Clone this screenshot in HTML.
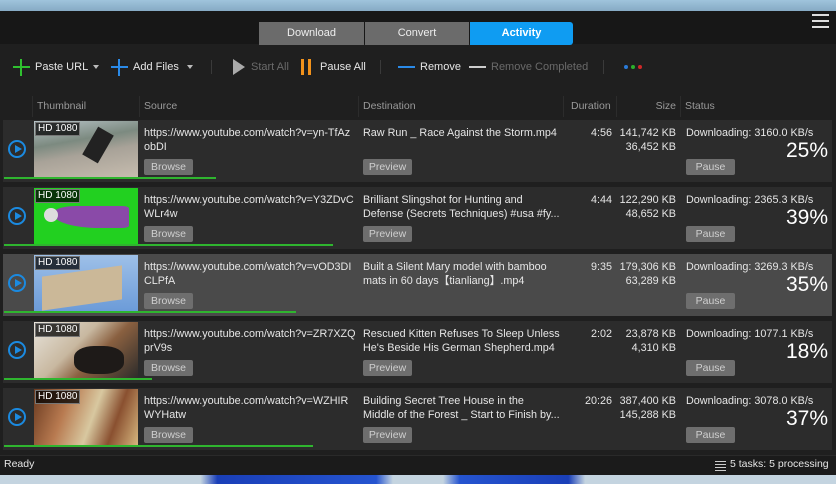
<!DOCTYPE html>
<html><head><meta charset="utf-8"><style>
*{margin:0;padding:0;box-sizing:border-box}
body{width:836px;height:484px;overflow:hidden;background:#1f1f1f;font-family:"Liberation Sans","Noto Sans CJK SC",sans-serif;font-size:11px;color:#e6e6e6;position:relative}
.a{position:absolute}
.top{left:0;top:0;width:836px;height:11px;background:linear-gradient(#9fc4dc,#86aac4)}
.hdr{left:0;top:11px;width:836px;height:33px;background:#171717}
.tab{top:22px;height:23px;background:#6b6b6b;color:#eee;text-align:center;line-height:23px;font-size:11px}
.tb{top:60px;font-size:11px;line-height:14px}
.col{top:96px;height:21px;line-height:21px;color:#9a9a9a;font-size:10.5px;border-left:1px solid #2c2c2c;padding-left:4px}
.row{left:3px;width:829px;height:62px;background:#2c2c2c}
.sel{background:#4a4a4a}
.btn{height:16px;line-height:16px;background:#6e6e6e;color:#cfcfcf;font-size:10.5px;text-align:center;border-radius:2px}
.pl{width:18px;height:18px;border:2px solid #1b8ae0;border-radius:50%}
.pl:after{content:"";position:absolute;left:5px;top:3px;border-left:7px solid #1b8ae0;border-top:4.5px solid transparent;border-bottom:4.5px solid transparent}
.th{width:104px;height:58px}
.hd{left:1px;top:1px;background:rgba(0,0,0,.75);color:#fff;font-size:10px;padding:0 2px;line-height:12px;border:1px solid #777}
.pg{height:2px;background:#2fb52f}
.t{line-height:14px;font-size:10.8px}
.r{text-align:right}
.pct{font-size:21px;color:#fff;text-align:right;width:100px}
.bot{left:0;top:475px;width:836px;height:9px;background:linear-gradient(90deg,#c4d4e0 0,#c4d4e0 24%,#1a3fb8 26%,#2554d0 45%,#c4d4e0 47%,#c4d4e0 53%,#2554d0 55%,#1a3fb8 68%,#c4d4e0 70%)}
</style></head><body>
<div class="a top"></div>
<div class="a hdr"></div>
<div class="a tab" style="left:259px;width:105px">Download</div>
<div class="a tab" style="left:365px;width:104px">Convert</div>
<div class="a tab" style="left:470px;width:103px;background:#0f9cf2;color:#fff;font-weight:bold;border-radius:0 3px 3px 0">Activity</div>
<div class="a" style="left:812px;top:14px;width:17px;height:2px;background:#ddd;box-shadow:0 6px 0 #ddd,0 12px 0 #ddd"></div>

<div class="a" style="left:13px;top:66px;width:17px;height:2px;background:#2fc02f"></div><div class="a" style="left:20px;top:59px;width:2px;height:17px;background:#2fc02f"></div>
<div class="a tb" style="left:35px">Paste URL</div><div class="a" style="left:93px;top:65px;border-top:4px solid #bbb;border-left:3.5px solid transparent;border-right:3.5px solid transparent"></div>
<div class="a" style="left:111px;top:66px;width:17px;height:2px;background:#2a8ae8"></div><div class="a" style="left:118px;top:59px;width:2px;height:17px;background:#2a8ae8"></div>
<div class="a tb" style="left:133px">Add Files</div><div class="a" style="left:187px;top:65px;border-top:4px solid #bbb;border-left:3.5px solid transparent;border-right:3.5px solid transparent"></div>
<div class="a" style="left:211px;top:60px;width:1px;height:14px;background:#3a3a3a"></div>
<div class="a" style="left:233px;top:59px;border-left:12px solid #aaa;border-top:8px solid transparent;border-bottom:8px solid transparent"></div>
<div class="a tb" style="left:251px;color:#6a6a6a">Start All</div>
<div class="a" style="left:301px;top:59px;width:3px;height:16px;background:#f2921b"></div><div class="a" style="left:308px;top:59px;width:3px;height:16px;background:#f2921b"></div>
<div class="a tb" style="left:320px">Pause All</div>
<div class="a" style="left:380px;top:60px;width:1px;height:14px;background:#3a3a3a"></div>
<div class="a" style="left:398px;top:66px;width:17px;height:2px;background:#2a8ae8"></div>
<div class="a tb" style="left:420px">Remove</div>
<div class="a" style="left:469px;top:66px;width:17px;height:2px;background:#ccc"></div>
<div class="a tb" style="left:491px;color:#6a6a6a">Remove Completed</div>
<div class="a" style="left:603px;top:60px;width:1px;height:14px;background:#3a3a3a"></div>
<div class="a" style="left:624px;top:65px;width:4px;height:4px;border-radius:50%;background:#2a7ad8"></div>
<div class="a" style="left:631px;top:65px;width:4px;height:4px;border-radius:50%;background:#2cb02c"></div>
<div class="a" style="left:638px;top:65px;width:4px;height:4px;border-radius:50%;background:#d02828"></div>

<div class="a col" style="left:32px;width:108px">Thumbnail</div>
<div class="a col" style="left:139px;width:220px">Source</div>
<div class="a col" style="left:358px;width:205px">Destination</div>
<div class="a col" style="left:563px;width:53px;padding-left:7px">Duration</div>
<div class="a col" style="left:616px;width:64px;text-align:right;padding-right:4px">Size</div>
<div class="a col" style="left:680px;width:150px">Status</div>

<div class="a row" style="top:120px"></div>
<div class="a row" style="top:187px"></div>
<div class="a row sel" style="top:254px"></div>
<div class="a row" style="top:321px"></div>
<div class="a row" style="top:388px"></div>

<div class="a pl" style="left:8px;top:140px"></div>
<div class="a pl" style="left:8px;top:207px"></div>
<div class="a pl" style="left:8px;top:274px"></div>
<div class="a pl" style="left:8px;top:341px"></div>
<div class="a pl" style="left:8px;top:408px"></div>

<div class="a th" style="left:34px;top:121px;background:linear-gradient(170deg,#b8c4c8 0,#7c8a80 35%,#a8a298 55%,#c8beb0 100%)"><div class="a" style="left:55px;top:8px;width:18px;height:32px;background:#222;transform:rotate(30deg)"></div><div class="a hd">HD 1080</div></div>
<div class="a th" style="left:34px;top:188px;background:#22d020"><div class="a" style="left:20px;top:18px;width:75px;height:22px;background:#8a4aa8;border-radius:30% 10% 10% 60%"></div><div class="a" style="left:10px;top:20px;width:14px;height:14px;border-radius:50%;background:#ddd"></div><div class="a hd">HD 1080</div></div>
<div class="a th" style="left:34px;top:255px;background:linear-gradient(180deg,#9ec0e8,#6a9ad8)"><div class="a" style="left:8px;top:16px;width:80px;height:34px;background:#cbb898;transform:skewY(-8deg)"></div><div class="a hd">HD 1080</div></div>
<div class="a th" style="left:34px;top:322px;background:linear-gradient(135deg,#e8e4dc 0,#c8b8a0 40%,#8a6040 60%,#2a2a2a 100%)"><div class="a" style="left:40px;top:24px;width:50px;height:28px;background:#1e1a18;border-radius:40%"></div><div class="a hd">HD 1080</div></div>
<div class="a th" style="left:34px;top:389px;background:linear-gradient(110deg,#6a3a20 0,#b87a50 30%,#d8c8a0 55%,#8a5030 75%,#d8b880 100%)"><div class="a hd">HD 1080</div></div>

<div class="a pg" style="left:4px;top:177px;width:212px"></div>
<div class="a pg" style="left:4px;top:244px;width:329px"></div>
<div class="a pg" style="left:4px;top:311px;width:292px"></div>
<div class="a pg" style="left:4px;top:378px;width:148px"></div>
<div class="a pg" style="left:4px;top:445px;width:309px"></div>

<div class="a t" style="left:144px;top:126px;width:212px">https://www.youtube.com/watch?v=yn-TfAz<br>obDI</div>
<div class="a t" style="left:363px;top:126px;width:200px">Raw Run _ Race Against the Storm.mp4</div>
<div class="a t r" style="left:570px;top:126px;width:42px">4:56</div>
<div class="a t r" style="left:606px;top:126px;width:70px">141,742 KB<br>36,452 KB</div>
<div class="a t" style="left:686px;top:126px">Downloading: 3160.0 KB/s</div>
<div class="a pct" style="left:728px;top:139px">25%</div>
<div class="a btn" style="left:144px;top:159px;width:49px">Browse</div>
<div class="a btn" style="left:363px;top:159px;width:49px">Preview</div>
<div class="a btn" style="left:686px;top:159px;width:49px">Pause</div>

<div class="a t" style="left:144px;top:193px;width:212px">https://www.youtube.com/watch?v=Y3ZDvC<br>WLr4w</div>
<div class="a t" style="left:363px;top:193px;width:200px">Brilliant Slingshot for Hunting and<br>Defense (Secrets Techniques) #usa #fy...</div>
<div class="a t r" style="left:570px;top:193px;width:42px">4:44</div>
<div class="a t r" style="left:606px;top:193px;width:70px">122,290 KB<br>48,652 KB</div>
<div class="a t" style="left:686px;top:193px">Downloading: 2365.3 KB/s</div>
<div class="a pct" style="left:728px;top:206px">39%</div>
<div class="a btn" style="left:144px;top:226px;width:49px">Browse</div>
<div class="a btn" style="left:363px;top:226px;width:49px">Preview</div>
<div class="a btn" style="left:686px;top:226px;width:49px">Pause</div>

<div class="a t" style="left:144px;top:260px;width:212px">https://www.youtube.com/watch?v=vOD3DI<br>CLPfA</div>
<div class="a t" style="left:363px;top:260px;width:200px">Built a Silent Mary model with bamboo<br>mats in 60 days【tianliang】.mp4</div>
<div class="a t r" style="left:570px;top:260px;width:42px">9:35</div>
<div class="a t r" style="left:606px;top:260px;width:70px">179,306 KB<br>63,289 KB</div>
<div class="a t" style="left:686px;top:260px">Downloading: 3269.3 KB/s</div>
<div class="a pct" style="left:728px;top:273px">35%</div>
<div class="a btn" style="left:144px;top:293px;width:49px">Browse</div>
<div class="a btn" style="left:686px;top:293px;width:49px">Pause</div>

<div class="a t" style="left:144px;top:327px;width:212px">https://www.youtube.com/watch?v=ZR7XZQ<br>prV9s</div>
<div class="a t" style="left:363px;top:327px;width:200px">Rescued Kitten Refuses To Sleep Unless<br>He's Beside His German Shepherd.mp4</div>
<div class="a t r" style="left:570px;top:327px;width:42px">2:02</div>
<div class="a t r" style="left:606px;top:327px;width:70px">23,878 KB<br>4,310 KB</div>
<div class="a t" style="left:686px;top:327px">Downloading: 1077.1 KB/s</div>
<div class="a pct" style="left:728px;top:340px">18%</div>
<div class="a btn" style="left:144px;top:360px;width:49px">Browse</div>
<div class="a btn" style="left:363px;top:360px;width:49px">Preview</div>
<div class="a btn" style="left:686px;top:360px;width:49px">Pause</div>

<div class="a t" style="left:144px;top:394px;width:212px">https://www.youtube.com/watch?v=WZHIR<br>WYHatw</div>
<div class="a t" style="left:363px;top:394px;width:200px">Building Secret Tree House in the<br>Middle of the Forest _ Start to Finish by...</div>
<div class="a t r" style="left:570px;top:394px;width:42px">20:26</div>
<div class="a t r" style="left:606px;top:394px;width:70px">387,400 KB<br>145,288 KB</div>
<div class="a t" style="left:686px;top:394px">Downloading: 3078.0 KB/s</div>
<div class="a pct" style="left:728px;top:407px">37%</div>
<div class="a btn" style="left:144px;top:427px;width:49px">Browse</div>
<div class="a btn" style="left:363px;top:427px;width:49px">Preview</div>
<div class="a btn" style="left:686px;top:427px;width:49px">Pause</div>

<div class="a" style="left:0;top:455px;width:836px;height:20px;background:#1b1b1b;border-top:1px solid #2a2a2a"></div>
<div class="a" style="left:4px;top:458px;font-size:10.5px">Ready</div>
<div class="a" style="left:715px;top:461px;width:11px;height:1px;background:#ccc;box-shadow:0 3px 0 #ccc,0 6px 0 #ccc,0 9px 0 #ccc"></div>
<div class="a" style="left:730px;top:458px;font-size:10.5px">5 tasks: 5 processing</div>
<div class="a bot"></div>
</body></html>
